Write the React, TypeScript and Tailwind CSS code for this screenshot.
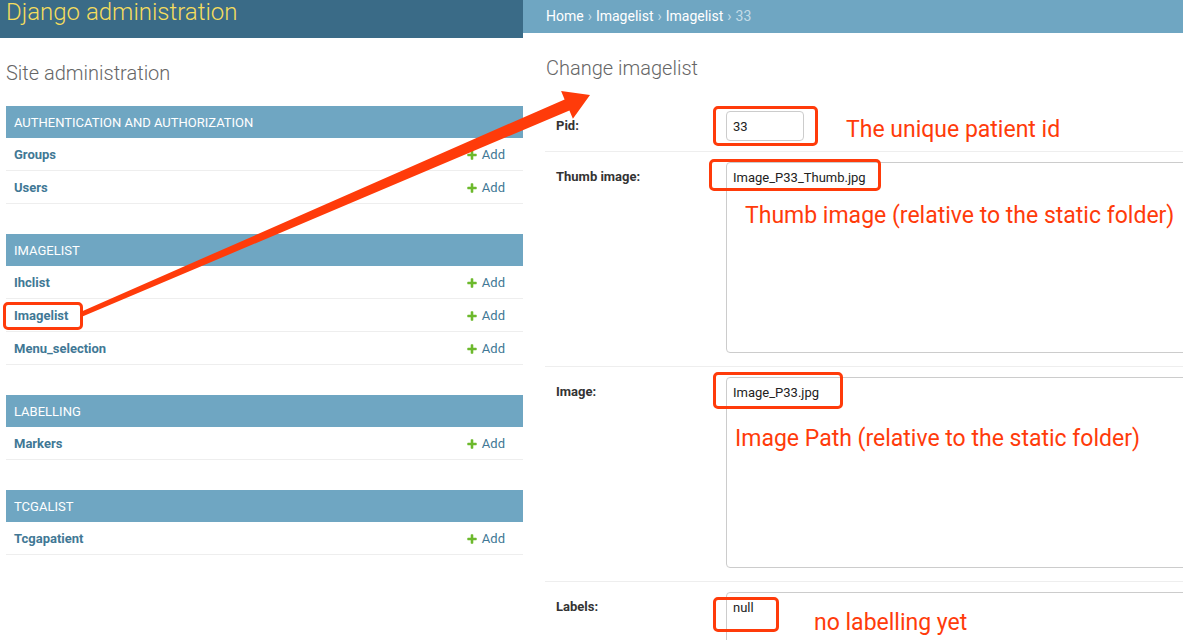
import React from 'react';

const modules = [
  { name: 'Authentication and Authorization', models: ['Groups', 'Users'] },
  { name: 'Imagelist', models: ['Ihclist', 'Imagelist', 'Menu_selection'] },
  { name: 'Labelling', models: ['Markers'] },
  { name: 'Tcgalist', models: ['Tcgapatient'] },
];

function AddIcon() {
  return (
    <svg width="12" height="12" viewBox="0 0 1792 1792" aria-hidden="true">
      <path
        fill="#6cb92c"
        d="M1600 796v192q0 40-28 68t-68 28h-416v416q0 40-28 68t-68 28h-192q-40 0-68-28t-28-68v-416h-416q-40 0-68-28t-28-68v-192q0-40 28-68t68-28h416v-416q0-40 28-68t68-28h192q40 0 68 28t28 68v416h416q40 0 68 28t28 68z"
      />
    </svg>
  );
}

function Module({ name, models }: { name: string; models: string[] }) {
  return (
    <div className="ml-[6px] mb-[30px]">
      <div className="h-[32px] bg-[#6fa6c2] px-[8px] pt-[1px] flex items-center text-[13px] uppercase text-white">
        {name}
      </div>
      {models.map((m) => (
        <div
          key={m}
          className="h-[33px] border-b border-[#eee] flex items-center justify-between pl-[8px] pr-[18px] pt-[1px] text-[13px]"
        >
          <span className="font-bold text-[#417895]">{m}</span>
          <span className="flex items-center gap-[4px] text-[#417895]">
            <AddIcon />
            Add
          </span>
        </div>
      ))}
    </div>
  );
}

function Field({
  label,
  value,
  textarea,
  last,
}: {
  label: string;
  value: string;
  textarea?: boolean;
  last?: boolean;
}) {
  return (
    <div
      className={`flex items-start pl-[11px] pt-[10px] ${textarea ? 'pb-[13px]' : 'pb-[10px]'} ${
        last ? '' : 'border-b border-[#eee]'
      }`}
    >
      <label className="w-[170px] shrink-0 pt-[7px] text-[13px] leading-[16px] font-bold text-[#333]">
        {label}
      </label>
      {textarea ? (
        <textarea
          readOnly
          value={value}
          className="w-[520px] h-[191px] shrink-0 resize-none border border-[#ccc] rounded-[4px] px-[6px] pt-[6px] text-[13px] leading-[18px] text-[#222] outline-none"
        />
      ) : (
        <input
          readOnly
          value={value}
          className="w-[78px] h-[30px] border border-[#ccc] rounded-[4px] px-[6px] text-[13px] text-[#222] outline-none"
        />
      )}
    </div>
  );
}

function Arrow() {
  return (
    <svg className="absolute inset-0 pointer-events-none" width="1183" height="640" aria-hidden="true">
      <polygon
        fill="#ff3b0a"
        points="81,311.7 564.6,99.4 561.1,91.1 590,95 572.9,118.7 569.4,110.4 83,316.3"
      />
    </svg>
  );
}

export default function App() {
  return (
    <div className="relative w-[1183px] h-[640px] overflow-hidden bg-white flex font-['Roboto',sans-serif]">
      {/* index page */}
      <div className="w-[523px] shrink-0">
        <div className="h-[38px] bg-[#3a6b87] overflow-hidden">
          <h1 className="pl-[6px] text-[24px] leading-[24px] font-light text-[#f5dd5d]">
            Django administration
          </h1>
        </div>
        <h1 className="pl-[6px] mt-[23px] text-[20px] leading-[24px] font-light text-[#666]">
          Site administration
        </h1>
        <div className="mt-[21px]">
          {modules.map((mod) => (
            <Module key={mod.name} name={mod.name} models={mod.models} />
          ))}
        </div>
      </div>

      {/* change form */}
      <div className="flex-1 min-w-0 overflow-hidden">
        <div className="h-[33px] bg-[#6fa6c2] pl-[23px] flex items-center text-[14px] text-[#c4dce8]">
          <span className="text-white">Home</span>
          <span className="mx-[4px]">›</span>
          <span className="text-white">Imagelist</span>
          <span className="mx-[4px]">›</span>
          <span className="text-white">Imagelist</span>
          <span className="mx-[4px]">›</span>
          33
        </div>
        <h1 className="pl-[23px] mt-[23px] text-[20px] leading-[24px] font-light text-[#666]">
          Change imagelist
        </h1>
        <div className="ml-[22px] mt-[21px]">
          <Field label="Pid:" value="33" />
          <Field label="Thumb image:" value="Image_P33_Thumb.jpg" textarea />
          <Field label="Image:" value="Image_P33.jpg" textarea />
          <Field label="Labels:" value="null" textarea last />
        </div>
      </div>

      {/* annotations */}
      <div className="absolute left-[3px] top-[302px] w-[80px] h-[28px] border-[3px] border-[#ff3b0a] rounded-[5px]" />
      <div className="absolute left-[713px] top-[106px] w-[105px] h-[40px] border-[3px] border-[#ff3b0a] rounded-[5px]" />
      <div className="absolute left-[709px] top-[159px] w-[172px] h-[32px] border-[3px] border-[#ff3b0a] rounded-[5px]" />
      <div className="absolute left-[713px] top-[372px] w-[130px] h-[37px] border-[3px] border-[#ff3b0a] rounded-[5px]" />
      <div className="absolute left-[713px] top-[597px] w-[66px] h-[35px] border-[3px] border-[#ff3b0a] rounded-[5px]" />

      <div className="absolute left-[846px] top-[116px] text-[23px] leading-[28px] text-[#ff3b0a]">
        The unique patient id
      </div>
      <div className="absolute left-[745px] top-[202px] text-[23px] leading-[28px] text-[#ff3b0a]">
        Thumb image (relative to the static folder)
      </div>
      <div className="absolute left-[735px] top-[425px] text-[23px] leading-[28px] text-[#ff3b0a]">
        Image Path (relative to the static folder)
      </div>
      <div className="absolute left-[814px] top-[609px] text-[23px] leading-[28px] text-[#ff3b0a]">
        no labelling yet
      </div>

      <Arrow />
    </div>
  );
}
